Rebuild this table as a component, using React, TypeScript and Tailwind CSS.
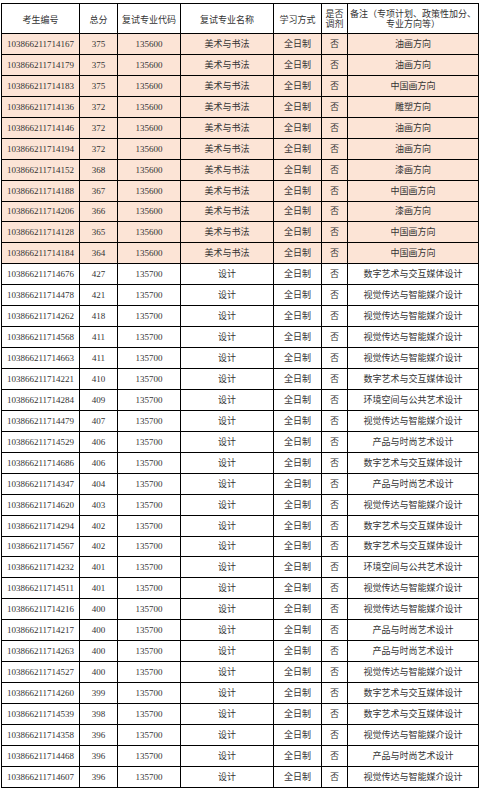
import React from "react";

type Row = [string, string, string, string, string];

const pink: Row[] = [
  ["103866211714167", "375", "135600", "美术与书法", "油画方向"],
  ["103866211714179", "375", "135600", "美术与书法", "油画方向"],
  ["103866211714183", "375", "135600", "美术与书法", "中国画方向"],
  ["103866211714136", "372", "135600", "美术与书法", "雕塑方向"],
  ["103866211714146", "372", "135600", "美术与书法", "油画方向"],
  ["103866211714194", "372", "135600", "美术与书法", "油画方向"],
  ["103866211714152", "368", "135600", "美术与书法", "漆画方向"],
  ["103866211714188", "367", "135600", "美术与书法", "中国画方向"],
  ["103866211714206", "366", "135600", "美术与书法", "漆画方向"],
  ["103866211714128", "365", "135600", "美术与书法", "中国画方向"],
  ["103866211714184", "364", "135600", "美术与书法", "中国画方向"],
];

const S = "视觉传达与智能媒介设计";
const D = "数字艺术与交互媒体设计";
const E = "环境空间与公共艺术设计";
const P = "产品与时尚艺术设计";

const white: Row[] = [
  ["103866211714676", "427", "135700", "设计", D],
  ["103866211714478", "421", "135700", "设计", S],
  ["103866211714262", "418", "135700", "设计", S],
  ["103866211714568", "411", "135700", "设计", S],
  ["103866211714663", "411", "135700", "设计", S],
  ["103866211714221", "410", "135700", "设计", D],
  ["103866211714284", "409", "135700", "设计", E],
  ["103866211714479", "407", "135700", "设计", S],
  ["103866211714529", "406", "135700", "设计", P],
  ["103866211714686", "406", "135700", "设计", D],
  ["103866211714347", "404", "135700", "设计", P],
  ["103866211714620", "403", "135700", "设计", S],
  ["103866211714294", "402", "135700", "设计", D],
  ["103866211714567", "402", "135700", "设计", D],
  ["103866211714232", "401", "135700", "设计", E],
  ["103866211714511", "401", "135700", "设计", S],
  ["103866211714216", "400", "135700", "设计", S],
  ["103866211714217", "400", "135700", "设计", P],
  ["103866211714263", "400", "135700", "设计", P],
  ["103866211714527", "400", "135700", "设计", S],
  ["103866211714260", "399", "135700", "设计", D],
  ["103866211714539", "398", "135700", "设计", D],
  ["103866211714358", "396", "135700", "设计", S],
  ["103866211714468", "396", "135700", "设计", P],
  ["103866211714607", "396", "135700", "设计", S],
];

const td = "border border-black text-center align-middle p-0 whitespace-nowrap";

export default function App() {
  return (
    <div className="bg-white w-[481px] h-[790px] pt-[3px] pl-[1px]">
      <table
        className="border-collapse table-fixed w-[477px] text-[9px] leading-[10px] text-[#333]"
        style={{ fontFamily: '"Liberation Serif", "Noto Sans CJK SC", serif' }}
      >
        <colgroup>
          <col className="w-[78px]" />
          <col className="w-[38px]" />
          <col className="w-[63px]" />
          <col className="w-[93px]" />
          <col className="w-[48px]" />
          <col className="w-[26px]" />
          <col className="w-[131px]" />
        </colgroup>
        <thead>
          <tr className="h-[30px]">
            <th className={`${td} font-normal pt-[2px]`}>考生编号</th>
            <th className={`${td} font-normal pt-[2px]`}>总分</th>
            <th className={`${td} font-normal pt-[2px]`}>复试专业代码</th>
            <th className={`${td} font-normal pt-[2px]`}>复试专业名称</th>
            <th className={`${td} font-normal pt-[2px]`}>学习方式</th>
            <th className={`${td} font-normal`}>
              是否
              <br />
              调剂
            </th>
            <th className={`${td} font-normal`}>
              备注（专项计划、政策性加分、
              <br />
              专业方向等）
            </th>
          </tr>
        </thead>
        <tbody>
          {pink.map((r) => (
            <tr key={r[0]} className="h-[20.94px] bg-[#fce4d6]">
              <td className={td}>{r[0]}</td>
              <td className={td}>{r[1]}</td>
              <td className={td}>{r[2]}</td>
              <td className={td}>{r[3]}</td>
              <td className={td}>全日制</td>
              <td className={td}>否</td>
              <td className={td}>{r[4]}</td>
            </tr>
          ))}
          {white.map((r) => (
            <tr key={r[0]} className="h-[20.94px]">
              <td className={td}>{r[0]}</td>
              <td className={td}>{r[1]}</td>
              <td className={td}>{r[2]}</td>
              <td className={td}>{r[3]}</td>
              <td className={td}>全日制</td>
              <td className={td}>否</td>
              <td className={td}>{r[4]}</td>
            </tr>
          ))}
        </tbody>
      </table>
    </div>
  );
}
